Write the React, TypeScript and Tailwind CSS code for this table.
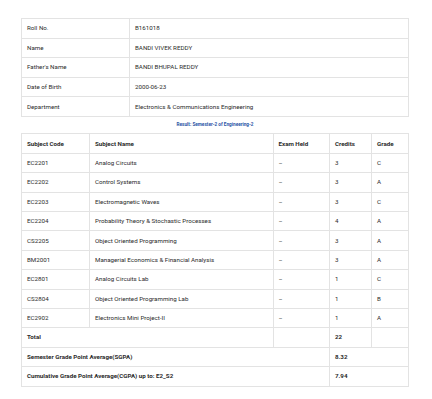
const info = [
  ["Roll No.", "B161018"],
  ["Name", "BANDI VIVEK REDDY"],
  ["Father's Name", "BANDI BHUPAL REDDY"],
  ["Date of Birth", "2000-06-23"],
  ["Department", "Electronics & Communications Engineering"],
];

const subjects = [
  ["EC2201", "Analog Circuits", "3", "C"],
  ["EC2202", "Control Systems", "3", "A"],
  ["EC2203", "Electromagnetic Waves", "3", "C"],
  ["EC2204", "Probability Theory & Stochastic Processes", "4", "A"],
  ["CS2205", "Object Oriented Programming", "3", "A"],
  ["BM2001", "Managerial Economics & Financial Analysis", "3", "A"],
  ["EC2801", "Analog Circuits Lab", "1", "C"],
  ["CS2804", "Object Oriented Programming Lab", "1", "B"],
  ["EC2902", "Electronics Mini Project-II", "1", "A"],
];

const cell = "border border-[#e3e3e3] px-[5px] h-[19.4px] p-0 text-left align-middle whitespace-nowrap";

export default function App() {
  return (
    <div className="w-[432px] h-[399px] bg-white font-['Roboto','Liberation_Sans',sans-serif] text-[6.2px] leading-none text-[#2b2b2b] antialiased">
      <div className="pt-[18px] pl-[21px] w-[409px]">
        <table className="w-[388px] table-fixed border-collapse">
          <colgroup>
            <col className="w-[108px]" />
            <col />
          </colgroup>
          <tbody>
            {info.map(([k, v]) => (
              <tr key={k}>
                <td className={`${cell} h-[19.6px]`}>{k}</td>
                <td className={`${cell} h-[19.6px]`}>{v}</td>
              </tr>
            ))}
          </tbody>
        </table>

        <div className="h-[16.5px] flex items-center justify-center text-[4.7px] font-bold text-[#2a55a5]">
          Result: Semester-2 of Engineering-2
        </div>

        <table className="w-[388px] table-fixed border-collapse">
          <colgroup>
            <col className="w-[68px]" />
            <col className="w-[183.5px]" />
            <col className="w-[56.5px]" />
            <col className="w-[42px]" />
            <col />
          </colgroup>
          <thead>
            <tr className="font-bold">
              <th className={cell}>Subject Code</th>
              <th className={cell}>Subject Name</th>
              <th className={cell}>Exam Held</th>
              <th className={cell}>Credits</th>
              <th className={cell}>Grade</th>
            </tr>
          </thead>
          <tbody>
            {subjects.map(([code, name, cr, gr]) => (
              <tr key={code}>
                <td className={cell}>{code}</td>
                <td className={cell}>{name}</td>
                <td className={cell}>–</td>
                <td className={cell}>{cr}</td>
                <td className={cell}>{gr}</td>
              </tr>
            ))}
            <tr className="font-bold">
              <td className={cell} colSpan={2}>Total</td>
              <td className={cell}></td>
              <td className={cell}>22</td>
              <td className={cell}></td>
            </tr>
            <tr className="font-bold">
              <td className={cell} colSpan={3}>Semester Grade Point Average(SGPA)</td>
              <td className={cell} colSpan={2}>8.32</td>
            </tr>
            <tr className="font-bold">
              <td className={cell} colSpan={3}>Cumulative Grade Point Average(CGPA) up to: E2_S2</td>
              <td className={cell} colSpan={2}>7.94</td>
            </tr>
          </tbody>
        </table>
      </div>
    </div>
  );
}
